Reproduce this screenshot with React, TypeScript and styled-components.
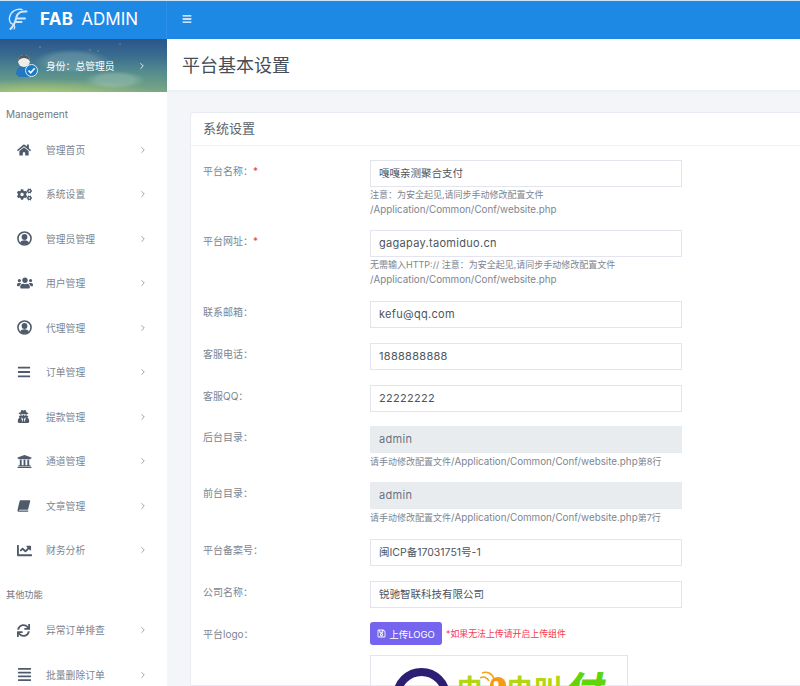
import React from "react";
import styled, { createGlobalStyle } from "styled-components";
import {
  FaHome,
  FaCogs,
  FaUsers,
  FaBars,
  FaAlignJustify,
  FaUserSecret,
  FaUniversity,
  FaChartLine,
  FaSync,
  FaRegSave,
} from "react-icons/fa";
import { FiChevronRight } from "react-icons/fi";

const GlobalStyle = createGlobalStyle`
  html, body {
    margin: 0;
    height: 686px;
    overflow: hidden;
    background: #f3f5f9;
    font-family: "Inter", "Noto Sans CJK SC", sans-serif;
  }
  * { box-sizing: border-box; }
`;

const Page = styled.div`
  width: 800px;
  height: 686px;
  overflow: hidden;
  display: flex;
  flex-direction: column;
`;

const TopBar = styled.header`
  height: 39px;
  flex: none;
  display: flex;
  background: #1e88e5;
  border-top: 1px solid #cfe3f7;
  color: #fff;
`;

const Brand = styled.div`
  width: 167px;
  flex: none;
  display: flex;
  align-items: center;
  padding: 0 0 3px 8px;
  gap: 12px;
  border-right: 1px solid #2c90e8;
`;

const BrandText = styled.div`
  font-size: 17px;
  letter-spacing: 0;
  font-weight: 400;
  white-space: nowrap;
  b { font-weight: 700; margin-right: 8px; letter-spacing: 0.3px; }
`;

const MenuToggle = styled.div`
  display: flex;
  align-items: center;
  padding: 0 0 3px 15px;
  font-size: 10px;
`;

const Body = styled.div`
  flex: 1;
  display: flex;
  min-height: 0;
`;

const Sidebar = styled.aside`
  width: 167px;
  flex: none;
  background: #fff;
  overflow: hidden;
`;

const UserPanel = styled.div`
  height: 53px;
  display: flex;
  align-items: center;
  padding-left: 15px;
  color: #fff;
  font-size: 9.8px;
  background:
    radial-gradient(circle at 40px 8px, rgba(255, 255, 255, 0.5) 0, transparent 1px),
    radial-gradient(circle at 90px 11px, rgba(255, 255, 255, 0.5) 0, transparent 1px),
    radial-gradient(circle at 120px 5px, rgba(255, 255, 255, 0.4) 0, transparent 1px),
    radial-gradient(circle at 98px 12px, rgba(255, 255, 255, 0.4) 0, transparent 1px),
    radial-gradient(ellipse 38px 12px at 72px 22px, rgba(150, 190, 190, 0.35) 60%, transparent 100%),
    radial-gradient(ellipse 30px 9px at 115px 41px, rgba(170, 205, 190, 0.4) 60%, transparent 100%),
    radial-gradient(ellipse 120px 16px at 40px 56px, rgba(195, 220, 110, 0.75) 0, transparent 100%),
    linear-gradient(180deg, #29568d 0%, #3a6c8e 32%, #548c8e 62%, #7ba784 100%);
`;

const UserName = styled.span`
  margin-left: 8px;
  width: 91px;
  white-space: nowrap;
`;

const SectionLabel = styled.div<{ $top: number; $bottom: number; $size: number }>`
  padding: ${(p) => p.$top}px 0 ${(p) => p.$bottom}px 6px;
  font-size: ${(p) => p.$size}px;
  line-height: 14px;
  color: #6f7783;
`;

const NavItem = styled.div`
  height: 44.5px;
  display: flex;
  align-items: center;
  color: #7d8590;
  font-size: 9.8px;
`;

const NavIcon = styled.span`
  width: 46px;
  padding-left: 17px;
  display: flex;
  align-items: center;
  color: #4f5b6b;
`;

const NavText = styled.span`
  flex: 1;
  white-space: nowrap;
`;

const Chevron = styled.span<{ $light?: boolean }>`
  width: 29px;
  display: flex;
  font-size: 10px;
  color: ${(p) => (p.$light ? "#fff" : "#8a919b")};
`;

const Main = styled.main`
  flex: 1;
  min-width: 0;
  display: flex;
  flex-direction: column;
`;

const TitleBar = styled.div`
  height: 51px;
  flex: none;
  background: #fff;
  display: flex;
  align-items: center;
  padding: 0 0 2px 15px;
  font-size: 18px;
  color: #454d57;
  box-shadow: 0 1px 3px rgba(90, 100, 130, 0.08);
`;

const Content = styled.div`
  padding: 22px 0 0 23px;
  display: flex;
  flex: 1;
  min-height: 0;
`;

const Card = styled.section`
  width: 640px;
  flex: none;
  background: #fff;
  border-radius: 4px 0 0 0;
  border: 1px solid #e9ebf2;
  border-right: none;
`;

const CardHeader = styled.div`
  height: 33px;
  display: flex;
  align-items: center;
  padding: 0 0 3px 12px;
  font-size: 13px;
  color: #5a626c;
  border-bottom: 1px solid #f0f1f5;
`;

const Form = styled.div`
  padding-top: 14px;
`;

const Row = styled.div<{ $gap: number }>`
  display: flex;
  margin-bottom: ${(p) => p.$gap}px;
`;

const Label = styled.div`
  width: 179px;
  flex: none;
  padding: 4px 0 0 12px;
  font-size: 10px;
  line-height: 14px;
  color: #7d8590;
  i { color: #f0384f; font-style: normal; }
`;

const Field = styled.div`
  width: 312px;
  flex: none;
`;

const Input = styled.input<{ $locked?: boolean; $zh?: boolean }>`
  display: block;
  width: 100%;
  height: 27px;
  padding: 0 8px 2px;
  font: 400 ${(p) => (p.$zh ? 10.5 : 11)}px "Inter", "Noto Sans CJK SC", sans-serif;
  letter-spacing: ${(p) => (p.$zh ? 0 : 0.3)}px;
  color: ${(p) => (p.$locked ? "#6b7280" : "#4d5560")};
  background: ${(p) => (p.$locked ? "#e9ecef" : "#fff")};
  border: 1px solid ${(p) => (p.$locked ? "#e7eaee" : "#e3e4ee")};
  outline: none;
`;

const Help = styled.div<{ $top: number }>`
  margin-top: ${(p) => p.$top}px;
  font-size: 9.8px;
  line-height: 15px;
  color: #7d8590;
  white-space: nowrap;
`;

const Zh = styled.span`
  font-size: 9px;
`;

const UploadRow = styled.div`
  display: flex;
  align-items: center;
  gap: 4px;
  margin-top: -1px;
`;

const UploadButton = styled.button`
  width: 72px;
  height: 23px;
  border: none;
  border-radius: 3px;
  background: #7464ee;
  color: #fff;
  display: flex;
  align-items: center;
  justify-content: center;
  gap: 3px;
  padding: 0;
  font: 400 9.5px "Inter", "Noto Sans CJK SC", sans-serif;
`;

const UploadNote = styled.span`
  font-size: 8.9px;
  color: #f8394e;
  white-space: nowrap;
`;

const LogoBox = styled.div`
  margin-top: 10px;
  width: 258px;
  height: 120px;
  border: 1px solid #e3e4ee;
  padding: 12px 0 0 22px;
  display: flex;
  gap: 6px;
`;

const LogoMark = styled.div`
  width: 57px;
  height: 57px;
  flex: none;
  border-radius: 50%;
  border: 8px solid #2c1f73;
`;

const LogoWord = styled.div`
  display: flex;
  margin-top: 5px;
  font: 700 28px "Noto Sans CJK SC", sans-serif;
  line-height: 30px;
  color: #b4d512;
`;

const LogoBug = styled.span`
  width: 28px;
  height: 24px;
  margin: -7px -1px 0 -5px;
  flex: none;
`;

const LogoPay = styled.span`
  margin-left: -1px;
  font-size: 38px;
  font-weight: 900;
  line-height: 30px;
  color: #62d40e;
  transform: skewX(-10deg);
`;

type NavIconType = React.ComponentType<{ size?: number | string }>;

function UserRing({ size }: { size?: number | string }) {
  return (
    <svg width={size} height={size} viewBox="0 0 16 16" fill="currentColor">
      <circle cx="8" cy="8" r="7" fill="none" stroke="currentColor" strokeWidth="1.7" />
      <circle cx="8" cy="6.4" r="3.1" />
      <path d="M3.4 12.4c.8-1.9 2.4-2.6 4.6-2.6s3.8.7 4.6 2.6C11.5 13.6 9.9 14.2 8 14.2s-3.5-.6-4.6-1.8z" />
    </svg>
  );
}

function SlantBook({ size }: { size?: number | string }) {
  return (
    <svg width={size} height={size} viewBox="0 0 16 16" fill="currentColor">
      <path d="M4 1.5h10.5c.5 0 .7.4.6.9l-2.3 9c-.1.5-.5.8-1 .8H3c-.8 0-1 .7-.5 1h9.7l.9-.4-.3 1.2c-.1.4-.5.7-1 .7H2.2C.9 14.700.3 13.500.7 12L3 2.300c.1-.5.5-.8 1-.8z" />
    </svg>
  );
}

const nav: [NavIconType, number, string][] = [
  [FaHome, 14, "管理首页"],
  [FaCogs, 15, "系统设置"],
  [UserRing, 15, "管理员管理"],
  [FaUsers, 16, "用户管理"],
  [UserRing, 15, "代理管理"],
  [FaBars, 14, "订单管理"],
  [FaUserSecret, 13, "提款管理"],
  [FaUniversity, 15, "通道管理"],
  [SlantBook, 14, "文章管理"],
  [FaChartLine, 15, "财务分析"],
];

const other: [NavIconType, number, string][] = [
  [FaSync, 13, "异常订单排查"],
  [FaAlignJustify, 15, "批量删除订单"],
];

function NavRow({ icon: Icon, size, text }: { icon: NavIconType; size: number; text: string }) {
  return (
    <NavItem>
      <NavIcon>
        <Icon size={size} />
      </NavIcon>
      <NavText>{text}</NavText>
      <Chevron>
        <FiChevronRight />
      </Chevron>
    </NavItem>
  );
}

function BrandLogo() {
  return (
    <svg width="20" height="22" viewBox="0 0 20 22" fill="none" stroke="#d6e6f8" strokeLinecap="round">
      <path d="M14 1.500C8 .5 2.500 3.500 1.500 9.500 1 13.500 3 16 6 16.500" strokeWidth="1.400" />
      <path d="M18.500 3.500C13.500 3 10.500 4 9 7.500 7.500 11 8 16 2.500 21" strokeWidth="2" />
      <path d="M9.500 10.500h7.500M8.500 14h5" strokeWidth="2" />
      <path d="M6 17c1 1.500 1 3 0 4" strokeWidth="1.100" />
    </svg>
  );
}

function Avatar() {
  return (
    <svg width="23" height="23" viewBox="0 0 23 23">
      <path d="M1 20c0-5 3-8 8-8s8 3 8 8l-3 3H4z" fill="#2477bd" />
      <circle cx="9" cy="7" r="6" fill="#f0ede8" />
      <path d="M3 7.500C3 3 6 1 9 1s6 2 6 6.500C13.500 4.500 11 4 9 4S4.500 4.500 3 7.500z" fill="#55595f" />
      <circle cx="16.500" cy="16.500" r="6" fill="#1d79c2" stroke="#dfeefa" strokeWidth="1" />
      <path d="M13.500 16.500l2.200 2.200 4-4.400" stroke="#fff" strokeWidth="1.700" fill="none" />
    </svg>
  );
}

function BugMark() {
  return (
    <svg width="28" height="24" viewBox="0 0 28 24" fill="none">
      <path d="M1 9c3-2 7-1 9 3M3 4c5-2 10 0 12 6" stroke="#f5a21c" strokeWidth="1.600" />
      <ellipse cx="19" cy="16" rx="8" ry="8" fill="#f59a12" />
      <ellipse cx="17" cy="15" rx="2.500" ry="3" fill="#fff" />
    </svg>
  );
}

export default function App() {
  return (
    <Page>
      <GlobalStyle />
      <TopBar>
        <Brand>
          <BrandLogo />
          <BrandText>
            <b>FAB</b>ADMIN
          </BrandText>
        </Brand>
        <MenuToggle>
          <FaBars />
        </MenuToggle>
      </TopBar>
      <Body>
        <Sidebar>
          <UserPanel>
            <Avatar />
            <UserName>身份：总管理员</UserName>
            <Chevron $light>
              <FiChevronRight />
            </Chevron>
          </UserPanel>
          <SectionLabel $top={15} $bottom={6.5} $size={10}>Management</SectionLabel>
          {nav.map(([icon, size, text]) => (
            <NavRow key={text} icon={icon} size={size} text={text} />
          ))}
          <SectionLabel $top={15.5} $bottom={6} $size={9.2}>其他功能</SectionLabel>
          {other.map(([icon, size, text]) => (
            <NavRow key={text} icon={icon} size={size} text={text} />
          ))}
        </Sidebar>
        <Main>
          <TitleBar>平台基本设置</TitleBar>
          <Content>
            <Card>
              <CardHeader>系统设置</CardHeader>
              <Form>
                <Row $gap={13}>
                  <Label>平台名称：<i>*</i></Label>
                  <Field>
                    <Input $zh defaultValue="嘎嘎亲测聚合支付" />
                    <Help $top={0}>
                      <Zh>注意：为安全起见,请同步手动修改配置文件</Zh>
                      <br />
                      /Application/Common/Conf/website.php
                    </Help>
                  </Field>
                </Row>
                <Row $gap={14}>
                  <Label>平台网址：<i>*</i></Label>
                  <Field>
                    <Input defaultValue="gagapay.taomiduo.cn" />
                    <Help $top={0}>
                      <Zh>无需输入HTTP:// 注意：为安全起见,请同步手动修改配置文件</Zh>
                      <br />
                      /Application/Common/Conf/website.php
                    </Help>
                  </Field>
                </Row>
                <Row $gap={15}>
                  <Label>联系邮箱：</Label>
                  <Field><Input defaultValue="kefu@qq.com" /></Field>
                </Row>
                <Row $gap={15}>
                  <Label>客服电话：</Label>
                  <Field><Input defaultValue="1888888888" /></Field>
                </Row>
                <Row $gap={14}>
                  <Label>客服QQ：</Label>
                  <Field><Input defaultValue="22222222" /></Field>
                </Row>
                <Row $gap={13}>
                  <Label>后台目录：</Label>
                  <Field>
                    <Input $locked readOnly value="admin" />
                    <Help $top={1}><Zh>请手动修改配置文件</Zh>/Application/Common/Conf/website.php<Zh>第8行</Zh></Help>
                  </Field>
                </Row>
                <Row $gap={14}>
                  <Label>前台目录：</Label>
                  <Field>
                    <Input $locked readOnly value="admin" />
                    <Help $top={1}><Zh>请手动修改配置文件</Zh>/Application/Common/Conf/website.php<Zh>第7行</Zh></Help>
                  </Field>
                </Row>
                <Row $gap={15}>
                  <Label>平台备案号：</Label>
                  <Field><Input $zh defaultValue="闽ICP备17031751号-1" /></Field>
                </Row>
                <Row $gap={15}>
                  <Label>公司名称：</Label>
                  <Field><Input $zh defaultValue="锐驰智联科技有限公司" /></Field>
                </Row>
                <Row $gap={0}>
                  <Label>平台logo：</Label>
                  <Field>
                    <UploadRow>
                      <UploadButton><FaRegSave size={9} />上传LOGO</UploadButton>
                      <UploadNote>*如果无法上传请开启上传组件</UploadNote>
                    </UploadRow>
                    <LogoBox>
                      <LogoMark />
                      <LogoWord>
                        虫
                        <LogoBug><BugMark /></LogoBug>
                        虫叫
                        <LogoPay>付</LogoPay>
                      </LogoWord>
                    </LogoBox>
                  </Field>
                </Row>
              </Form>
            </Card>
          </Content>
        </Main>
      </Body>
    </Page>
  );
}
